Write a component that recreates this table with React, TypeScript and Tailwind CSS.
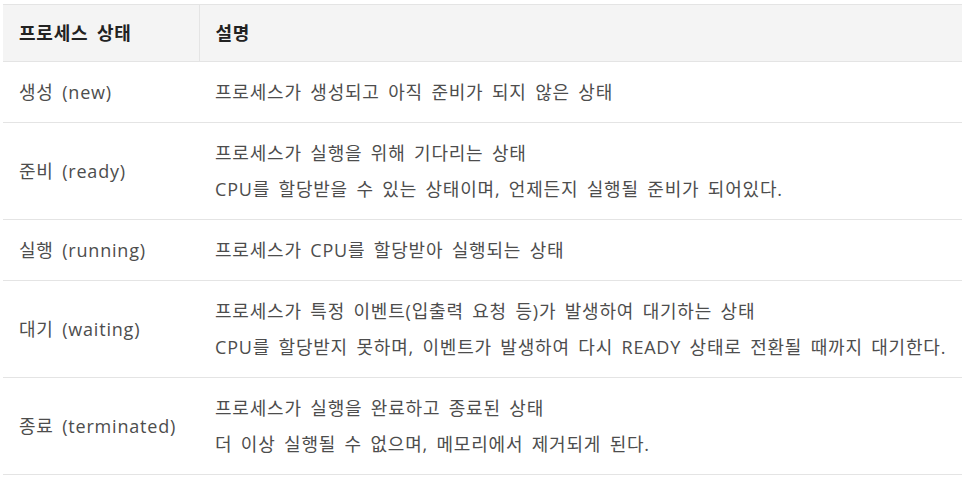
const rows: { state: string; desc: string[] }[] = [
  { state: "생성 (new)", desc: ["프로세스가 생성되고 아직 준비가 되지 않은 상태"] },
  {
    state: "준비 (ready)",
    desc: [
      "프로세스가 실행을 위해 기다리는 상태",
      "CPU를 할당받을 수 있는 상태이며, 언제든지 실행될 준비가 되어있다.",
    ],
  },
  { state: "실행 (running)", desc: ["프로세스가 CPU를 할당받아 실행되는 상태"] },
  {
    state: "대기 (waiting)",
    desc: [
      "프로세스가 특정 이벤트(입출력 요청 등)가 발생하여 대기하는 상태",
      "CPU를 할당받지 못하며, 이벤트가 발생하여 다시 READY 상태로 전환될 때까지 대기한다.",
    ],
  },
  {
    state: "종료 (terminated)",
    desc: [
      "프로세스가 실행을 완료하고 종료된 상태",
      "더 이상 실행될 수 없으며, 메모리에서 제거되게 된다.",
    ],
  },
];

export default function App() {
  return (
    <div
      className="bg-white w-[970px] h-[477px] pt-1 pl-[3px]"
      style={{ fontFamily: '"Open Sans", "Noto Sans CJK KR", sans-serif' }}
    >
      <table className="w-[959px] table-fixed border-collapse text-[18px] tracking-[0.8px] [word-spacing:3px] text-[#4d4d4d]">
        <thead>
          <tr className="bg-[#f4f4f4] border-t border-b border-[#e4e4e4]">
            <th className="w-[196px] h-[57px] px-4 text-left font-bold text-[#222] border-r border-[#e4e4e4]">
              프로세스 상태
            </th>
            <th className="px-4 text-left font-bold text-[#222]">설명</th>
          </tr>
        </thead>
        <tbody>
          {rows.map((r) => (
            <tr key={r.state} className="border-b border-[#e4e4e4]">
              <td className="px-4 py-3 align-middle whitespace-nowrap">{r.state}</td>
              <td className="px-4 py-3">
                {r.desc.map((d) => (
                  <p key={d} className="h-9 leading-9 whitespace-nowrap">
                    {d}
                  </p>
                ))}
              </td>
            </tr>
          ))}
        </tbody>
      </table>
    </div>
  );
}
